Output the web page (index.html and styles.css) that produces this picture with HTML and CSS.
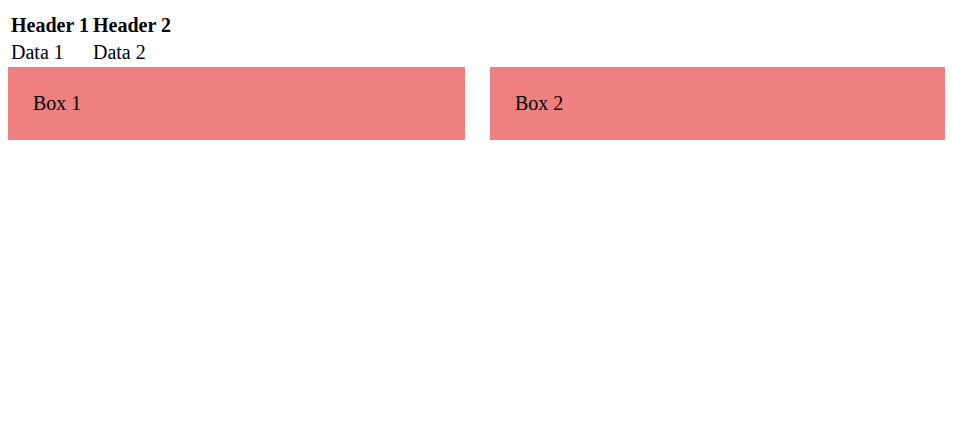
FILE: index.html
```html
<!DOCTYPE html>
<html>
<head>
<meta charset="utf-8">
<link rel="stylesheet" href="styles.css">
</head>
<body>
<table class="data-table">
  <tr><th>Header 1</th><th>Header 2</th></tr>
  <tr><td>Data 1</td><td>Data 2</td></tr>
</table>
<div class="boxes">
  <div class="box">Box 1</div>
  <div class="box">Box 2</div>
</div>
</body>
</html>
```
FILE: styles.css
```css
body {
  margin: 8px;
  font-family: "Liberation Serif", "Times New Roman", serif;
  font-size: 20px;
  color: #000;
  background: #fff;
}
.data-table {
  margin-top: 3px;
  border-spacing: 2px;
  font-size: 20px;
}
.data-table th,
.data-table td {
  padding: 1px;
  text-align: left;
}
.boxes {
  display: grid;
  grid-template-columns: 457px 457px;
  column-gap: 25px;
}
.box {
  background: #f08080;
  padding: 25px;
}
```
